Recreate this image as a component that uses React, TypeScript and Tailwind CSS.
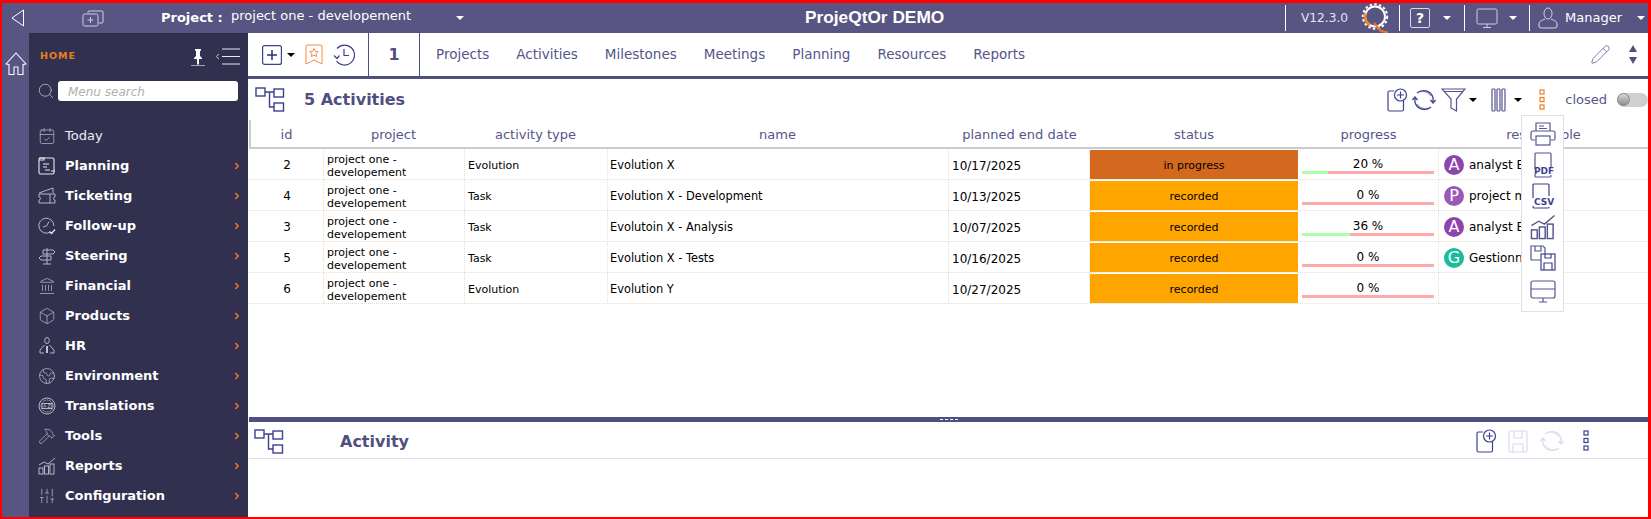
import React from 'react';
import {
  CalendarCheck,
  Landmark,
  Box,
  Earth,
  Hammer,
  SlidersVertical,
  Search,
  Pencil,
  ChevronLeft,
  ChevronRight,
} from 'lucide-react';

const navy = '#3f3f8f';

const Caret = ({ className = 'border-t-white' }: { className?: string }) => (
  <span className={`inline-block w-0 h-0 border-x-[4px] border-x-transparent border-t-[4px] ${className}`} />
);

const Sep = () => <span className="w-px h-[26px] bg-white" />;

const TreeIcon = () => (
  <svg width="31" height="27" viewBox="0 0 31 27" fill="none" stroke={navy} strokeWidth="1.4">
    <rect x="1" y="2" width="9" height="8" />
    <rect x="19" y="3" width="9.5" height="8" />
    <rect x="19" y="17" width="9.5" height="8" />
    <path d="M10 6h9M14.500 6v15h4.500" />
  </svg>
);

const AddDoc = () => (
  <svg width="21" height="24" viewBox="0 0 21 24" fill="none" stroke={navy} strokeWidth="1.2">
    <path d="M7 3H2.500Q1 3 1 4.500V21.500Q1 23 2.500 23H15Q16.500 23 16.500 21.500V13" />
    <circle cx="13.500" cy="7" r="6" fill="#fff" />
    <path d="M13.500 3.500v7M10 7h7" />
  </svg>
);

const Refresh = ({ color = navy }: { color?: string }) => (
  <svg width="24" height="24" viewBox="0 0 24 24" fill="none" stroke={color} strokeWidth="1.3">
    <path d="M5 5A10 10 0 0 1 21 9.500V15" />
    <path d="M7.500 3.800A10 10 0 0 1 19 8" opacity=".5" />
    <path d="M19 19A10 10 0 0 1 3 14.500V9" />
    <path d="M16.500 20.200A10 10 0 0 1 5 16" opacity=".5" />
    <path d="M.5 12 3 9 5.500 12M18.500 12 21 15 23.500 12" />
  </svg>
);

const FloppyIcon = ({ color = '#dcdaea' }: { color?: string }) => (
  <svg width="20" height="23" viewBox="0 0 20 23" fill="none" stroke={color} strokeWidth="1.2">
    <rect x="1" y="1" width="18" height="21" rx="1.500" />
    <path d="M6 1v7h8V1M5 22V14h10v8" />
  </svg>
);

const DotsIcon = ({ color }: { color: string }) => (
  <svg width="6" height="22" viewBox="0 0 6 22" fill="none" stroke={color} strokeWidth="1.2">
    <rect x="1" y="1" width="4" height="4" />
    <rect x="1" y="8.500" width="4" height="4" />
    <rect x="1" y="16" width="4" height="4" />
  </svg>
);

const QLogo = () => (
  <svg width="30" height="30" viewBox="0 0 30 30" fill="none">
    <circle cx="14" cy="13.500" r="12.200" stroke="#fff" strokeWidth="2" strokeDasharray="2.500 2.200" />
    <circle cx="14" cy="13.500" r="10" stroke="#fff" strokeWidth="2" />
    <path d="M9 22A10 10 0 0 1 4.500 10.500" stroke="#f0892c" strokeWidth="3" />
    <path d="M13 20 20 28 27 29.500" stroke="#e87c22" strokeWidth="2" />
  </svg>
);

const HomeIcon = () => (
  <svg width="22" height="24" viewBox="0 0 22 24" fill="none" stroke="#fff" strokeWidth="1.1">
    <path d="M1 12 11 1l10 11-3 .5V22.500h-5V15H9v7.500H4V12.500z" strokeLinejoin="round" />
  </svg>
);

// sidebar icons that lucide has no close match for
const PlanningIcon = () => (
  <svg width="18" height="18" viewBox="0 0 18 18" fill="none" stroke="#e8e8f0" strokeWidth="1.1">
    <rect x="1" y="1" width="15" height="16" rx="1.500" />
    <path d="M1 1h5v2H1M5 7h6M5 10h4M7 13h5M13 14h4" />
  </svg>
);

const TicketIcon = () => (
  <svg width="18" height="18" viewBox="0 0 18 18" fill="none" stroke="#b5b5c6" strokeWidth="1">
    <path d="M1 6 15 1v5M1 7h16v3a1.500 1.500 0 0 0 0 3v3H1v-3a1.500 1.500 0 0 0 0-3zM12 7v9" />
  </svg>
);

const FollowIcon = () => (
  <svg width="18" height="18" viewBox="0 0 18 18" fill="none" stroke="#b5b5c6" strokeWidth="1">
    <path d="M12 15.200A7.500 7.500 0 1 1 15.800 9" />
    <path d="M11 4.500 8.500 9 5 10" />
    <path d="M11.500 14.500 13.500 16.500 17 12.500" stroke="#e8e8f0" strokeWidth="1.300" />
  </svg>
);

const SteeringIcon = () => (
  <svg width="18" height="18" viewBox="0 0 18 18" fill="none" stroke="#b5b5c6" strokeWidth="1">
    <path d="M9 1v16M5 3h10l2 2-2 2H5zM13 9H3L1 11l2 2h10zM5 17h8" />
  </svg>
);

const PersonTie = () => (
  <svg width="18" height="18" viewBox="0 0 18 18" fill="none" stroke="#b5b5c6" strokeWidth="1">
    <ellipse cx="9" cy="3.500" rx="2.300" ry="3" />
    <path d="M6.500 8 2 13v3h4M11.500 8 16 13v3h-4" />
    <path d="M9 9v7" strokeWidth="1.600" stroke="#e8e8f0" />
  </svg>
);

const TranslateIcon = () => (
  <svg width="18" height="18" viewBox="0 0 18 18" fill="none" stroke="#b5b5c6" strokeWidth="1">
    <circle cx="9" cy="9" r="8" />
    <circle cx="9" cy="9" r="6" strokeDasharray="1.500 1" />
    <rect x="4" y="6.500" width="10" height="5" fill="#31314f" />
    <path d="M5.500 10.500 6.800 7.500 8 10.500M10 7.500h2.500L10 10.500h2.500" strokeWidth=".7" />
  </svg>
);

const BarsIcon = ({ size = 18, color = '#b5b5c6' }: { size?: number; color?: string }) => (
  <svg width={size} height={size} viewBox="0 0 18 18" fill="none" stroke={color} strokeWidth="1">
    <path d="M1 8 6 5 10 7 17 1" />
    <rect x="1" y="11" width="4" height="6" />
    <rect x="6.500" y="9" width="4" height="8" />
    <rect x="12" y="7" width="4" height="10" />
  </svg>
);

const iconProps = { size: 18, strokeWidth: 1, color: '#b5b5c6' };

const menu: { label: string; bold: boolean; icon: React.ReactNode }[] = [
  { label: 'Today', bold: false, icon: <CalendarCheck {...iconProps} /> },
  { label: 'Planning', bold: true, icon: <PlanningIcon /> },
  { label: 'Ticketing', bold: true, icon: <TicketIcon /> },
  { label: 'Follow-up', bold: true, icon: <FollowIcon /> },
  { label: 'Steering', bold: true, icon: <SteeringIcon /> },
  { label: 'Financial', bold: true, icon: <Landmark {...iconProps} /> },
  { label: 'Products', bold: true, icon: <Box {...iconProps} /> },
  { label: 'HR', bold: true, icon: <PersonTie /> },
  { label: 'Environment', bold: true, icon: <Earth {...iconProps} /> },
  { label: 'Translations', bold: true, icon: <TranslateIcon /> },
  { label: 'Tools', bold: true, icon: <Hammer {...iconProps} /> },
  { label: 'Reports', bold: true, icon: <BarsIcon /> },
  { label: 'Configuration', bold: true, icon: <SlidersVertical {...iconProps} /> },
];

const tabs = ['Projects', 'Activities', 'Milestones', 'Meetings', 'Planning', 'Resources', 'Reports'];

const rows = [
  { id: 2, type: 'Evolution', name: 'Evolution X', date: '10/17/2025', status: 'in progress', pct: 20, who: 'analyst B', initial: 'A' },
  { id: 4, type: 'Task', name: 'Evolution X - Development', date: '10/13/2025', status: 'recorded', pct: 0, who: 'project m', initial: 'P' },
  { id: 3, type: 'Task', name: 'Evolutoin X - Analysis', date: '10/07/2025', status: 'recorded', pct: 36, who: 'analyst B', initial: 'A' },
  { id: 5, type: 'Task', name: 'Evolution X - Tests', date: '10/16/2025', status: 'recorded', pct: 0, who: 'Gestionna', initial: 'G' },
  { id: 6, type: 'Evolution', name: 'Evolution Y', date: '10/27/2025', status: 'recorded', pct: 0, who: '', initial: '' },
];

const avatarColor: Record<string, string> = { A: '#8e44ad', P: '#9b59b6', G: '#1abc9c' };

const columns = ['id', 'project', 'activity type', 'name', 'planned end date', 'status', 'progress', 'responsible'];
const widths = [75, 141, 143, 341, 141, 208, 141, 209];

const cell = 'p-0 border-b border-r border-dotted border-[#e4e0cf] align-middle';

const ExportMenu = () => (
  <div className="absolute left-[1273px] top-[82px] w-[43px] h-[197px] bg-white border border-[#dfdfe8] flex flex-col items-center pt-[5px] gap-[5px]">
    <svg width="26" height="26" viewBox="0 0 26 26" fill="none" stroke="#55558f" strokeWidth="1.200">
      <path d="M6 10V2h14v8M9 5h5M9 7.500h8" />
      <path d="M5 19H2.500Q1 19 1 17.500V12Q1 10 3 10H23Q25 10 25 12V17.500Q25 19 23.500 19H21" />
      <rect x="6" y="15" width="14" height="9" />
    </svg>
    <svg width="26" height="26" viewBox="0 0 26 26" fill="none" stroke="#55558f" strokeWidth="1.200">
      <path d="M5 17V2q0-1 1-1h14q1 0 1 1v13M5 22v2q0 1 1 1h14q1 0 1-1v-1" />
      <text x="4" y="21.500" fontSize="9" fontWeight="700" fill="#3f3f8f" stroke="none" fontFamily="DejaVu Sans">PDF</text>
    </svg>
    <svg width="26" height="26" viewBox="0 0 26 26" fill="none" stroke={navy} strokeWidth="1.200">
      <path d="M3 15V2q0-1 1-1h14q1 0 1 1v11M3 23v1q0 1 1 1h14q1 0 1-1" />
      <text x="4" y="22" fontSize="9" fontWeight="700" fill="#3f3f8f" stroke="none" fontFamily="DejaVu Sans">CSV</text>
    </svg>
    <BarsIcon size={26} color="#55558f" />
    <svg width="26" height="26" viewBox="0 0 26 26" fill="none" stroke="#55558f" strokeWidth="1.200">
      <path d="M1 15V1h12l2 2v6M5 1v5h6V1M1 15h10" />
      <rect x="11" y="9" width="14" height="16" stroke={navy} fill="#fff" />
      <path d="M15 9v4h6V9M14 25v-7h8v7" stroke={navy} />
    </svg>
    <div className="mt-[4px]">
      <svg width="26" height="24" viewBox="0 0 26 24" fill="none" stroke="#55558f" strokeWidth="1.200">
        <rect x="1" y="1" width="24" height="17" rx="2" />
        <path d="M1 9h24M9 22h8M13 18v4" />
      </svg>
    </div>
  </div>
);

export default function App() {
  return (
    <div className="w-[1651px] h-[519px] box-border border-t-[3px] border-l-2 border-r-[3px] border-b-2 border-[#ff0000] overflow-hidden flex flex-col bg-white font-['DejaVu_Sans',sans-serif]">
      {/* top bar */}
      <div className="h-[30px] shrink-0 bg-[#585582] flex items-center text-white">
        <svg className="ml-[9px]" width="14" height="18" viewBox="0 0 14 18" fill="none" stroke="#fff" strokeWidth="1">
          <path d="M12.500 1v16L1 9z" />
        </svg>
        <svg className="ml-[57px]" width="22" height="17" viewBox="0 0 22 17" fill="none" stroke="#cfcfe0" strokeWidth="1">
          <path d="M6 3V2q0-1 1-1h13q1 0 1 1v10q0 1-1 1h-3" />
          <rect x="1" y="4" width="15" height="12" rx="1.500" />
          <path d="M8.500 7v6M5.500 10h6" />
        </svg>
        <span className="ml-[57px] text-[13px] font-bold w-[70px]">Project :</span>
        <span className="text-[13px] -mt-[4px] w-[225px]">project one - developement</span>
        <Caret />
        <span className="ml-[341px] font-['Liberation_Sans',sans-serif] font-bold text-[17.300px]">ProjeQtOr DEMO</span>
        <span className="ml-auto flex"><Sep /></span>
        <span className="ml-[15px] text-[12.200px] w-[50px] text-[#e4e4ee]">V12.3.0</span>
        <span className="ml-[10px] flex"><QLogo /></span>
        <span className="ml-[8px] flex"><Sep /></span>
        <span className="ml-[10px] w-5 h-5 border border-[#d8d8e6] rounded-[2px] flex items-center justify-center text-[14px] font-bold">?</span>
        <span className="ml-[13px] flex"><Caret /></span>
        <span className="ml-[13px] flex"><Sep /></span>
        <svg className="ml-[11px]" width="22" height="21" viewBox="0 0 22 21" fill="none" stroke="#cfcfe0" strokeWidth="1">
          <rect x="1" y="1" width="20" height="15" rx="1.500" />
          <path d="M11 16v3M7 19.500h8" />
        </svg>
        <span className="ml-[11px] flex"><Caret /></span>
        <span className="ml-[12px] flex"><Sep /></span>
        <svg className="ml-[8px]" width="20" height="22" viewBox="0 0 20 22" fill="none" stroke="#d8d8e6" strokeWidth="1">
          <ellipse cx="10" cy="6.500" rx="4" ry="5.500" />
          <path d="M7 12c-3 1.500-6 2-6 5v2q0 2 2 2h14q2 0 2-2v-2c0-3-3-3.500-6-5" />
        </svg>
        <span className="ml-[7px] text-[13px] w-[72px]">Manager</span>
        <span className="flex"><Caret /></span>
        <span className="w-[3px]" />
      </div>

      <div className="flex-1 min-h-0 flex">
        {/* left strip */}
        <div className="w-[27px] shrink-0 bg-[#585582] flex justify-center pt-[19px]">
          <HomeIcon />
        </div>

        {/* side menu */}
        <div className="w-[219px] shrink-0 bg-[#31314f] flex flex-col">
          <div className="h-[48px] flex items-center pl-[11px] pr-[8px] pb-[1px]">
            <span className="text-[9.500px] font-bold tracking-[1px] text-[#ee7d22] flex-1">HOME</span>
            <svg width="14" height="18" viewBox="0 0 14 18" fill="#fff" stroke="none">
              <path d="M4 1h6v1.500L9 3v5l2 2v1H8v5l-1 1-1-1v-5H3v-1l2-2V3L4 2.500z" />
              <path d="M0 17h14v.8H0z" opacity=".7" />
            </svg>
            <span className="ml-[8px] flex items-center">
              <ChevronLeft size={9} strokeWidth={2} color="#fff" />
              <svg width="18" height="17" viewBox="0 0 18 17" stroke="#e8e8f0" strokeWidth="1">
                <path d="M0 1h18M0 8.500h18M0 16h18" />
              </svg>
            </span>
          </div>
          <div className="h-[20px] flex items-center pl-[8px] pr-[10px] mb-[20px]">
            <Search size={18} strokeWidth={1.300} color="#a8a8b8" className="shrink-0" />
            <div className="ml-[3px] flex-1 h-[20px] bg-white rounded-[3px] flex items-center pl-[10px] pt-px text-[12px] italic text-[#b0b0b0]">
              Menu search
            </div>
          </div>
          {menu.map((m) => (
            <div key={m.label} className="h-[30px] shrink-0 flex items-center pl-[9px] pr-[6px] text-white">
              <span className="w-[18px] flex">{m.icon}</span>
              <span className={`ml-[9px] flex-1 text-[13px] ${m.bold ? 'font-bold' : 'text-[#ececf4]'}`}>{m.label}</span>
              {m.bold && <ChevronRight size={10} strokeWidth={3.500} color="#ee7d22" />}
            </div>
          ))}
        </div>

        {/* main */}
        <div className="flex-1 min-w-0 flex flex-col relative">
          <div className="h-[43px] shrink-0 flex items-stretch">
            <div className="w-[121px] flex items-center pl-[14px] border-r border-[#4f4f80]">
              <svg width="20" height="20" viewBox="0 0 20 20" fill="none" stroke={navy} strokeWidth="1.200">
                <rect x=".6" y=".6" width="18.800" height="18.800" rx="2" />
                <path d="M10 5v10M5 10h10" stroke="#2d2d80" strokeWidth="1.500" />
              </svg>
              <span className="ml-[5px] flex"><Caret className="border-t-black" /></span>
              <svg className="ml-[10px]" width="18" height="21" viewBox="0 0 18 21" fill="none" stroke="#f08c4c" strokeWidth="1">
                <path d="M1 2q0-1 1-1h14q1 0 1 1v18l-8-4-8 4z" />
                <path d="M9 4.500l1.300 2.700 2.900.4-2.100 2 .5 2.900L9 11.200l-2.600 1.300.5-2.900-2.100-2 2.900-.4z" />
              </svg>
              <svg className="ml-[10px]" width="22" height="22" viewBox="0 0 22 22" fill="none" stroke={navy} strokeWidth="1.200">
                <path d="M4 4.500A10 10 0 1 1 3.500 17" />
                <path d="M11 5v6.500h5M1 11.500l3 3 2.500-3" />
              </svg>
            </div>
            <div className="w-[51px] flex items-center justify-center border-r border-[#4f4f80] text-[16px] font-bold text-[#4f4f80]">1</div>
            <div className="flex items-center pl-[16px] gap-[27px] text-[13.500px] text-[#55558a]">
              {tabs.map((t) => <span key={t}>{t}</span>)}
            </div>
            <div className="ml-auto flex items-center pr-[11px]">
              <Pencil size={21} strokeWidth={1} color="#6a6a98" />
              <div className="ml-[18px] flex flex-col gap-[5px]">
                <span className="w-0 h-0 border-x-[4px] border-x-transparent border-b-[7px] border-b-[#4f4f80]" />
                <span className="w-0 h-0 border-x-[4px] border-x-transparent border-t-[7px] border-t-[#4f4f80]" />
              </div>
            </div>
          </div>
          <div className="h-[3px] shrink-0 bg-[#4f4f80]" />

          {/* list pane */}
          <div className="h-[338px] shrink-0 flex flex-col">
            <div className="h-[41px] shrink-0 flex items-center pl-[7px]">
              <TreeIcon />
              <span className="ml-[18px] text-[16px] font-bold text-[#4f4f80]">5 Activities</span>
              <div className="ml-auto flex items-center text-[#55558a]">
                <AddDoc />
                <span className="ml-[4px] flex"><Refresh /></span>
                <svg className="ml-[5px]" width="25" height="24" viewBox="0 0 25 24" fill="none" stroke="#55558f" strokeWidth="1.200">
                  <path d="M1 1h23L15.500 11v12L10 20V11zM3.500 3.500h18" />
                </svg>
                <span className="ml-[3px] flex"><Caret className="border-t-black" /></span>
                <svg className="ml-[14px]" width="15" height="24" viewBox="0 0 15 24" fill="none" stroke="#55558f" strokeWidth="1.200">
                  <rect x="1" y="1" width="3" height="22" rx=".8" />
                  <rect x="6" y="1" width="3" height="22" rx=".8" />
                  <rect x="11" y="1" width="3" height="22" rx=".8" />
                </svg>
                <span className="ml-[8px] flex"><Caret className="border-t-black" /></span>
                <span className="ml-[17px] flex"><DotsIcon color="#ee7d22" /></span>
                <span className="ml-[20px] text-[13px]">closed</span>
                <span className="ml-[10px] w-[31px] h-[14px] rounded-full bg-[#cfcfcf] flex items-center">
                  <span className="w-[13px] h-[13px] rounded-full border border-[#888] bg-linear-to-b from-[#d8d8d8] to-[#8e8e8e]" />
                </span>
              </div>
            </div>

            <div className="pl-px">
              <table className="table-fixed w-[1399px] border-separate border-spacing-0 text-[11px] text-black">
                <colgroup>
                  {widths.map((w, i) => <col key={i} style={{ width: w }} />)}
                </colgroup>
                <thead>
                  <tr>
                    {columns.map((c, i) => (
                      <th key={c} className={`p-0 pt-[2px] h-[29px] border-b-2 border-[#cccccc] text-[13px] font-normal text-[#55558a] text-center ${i === 0 ? 'border-l-2' : ''} ${i < 4 ? 'pr-[2px]' : ''}`}>
                        {c}
                      </th>
                    ))}
                  </tr>
                </thead>
                <tbody>
                  {rows.map((r) => (
                    <tr key={r.id}>
                      <td className={`${cell} h-[31px] pt-[2px] pl-[2px] text-center text-[12px]`}>{r.id}</td>
                      <td className={`${cell} pl-[3px] pt-[3px] leading-[13px]`}>project one -<br />developement</td>
                      <td className={`${cell} pl-[3px] pt-[4px]`}>{r.type}</td>
                      <td className={`${cell} pl-[2px] pt-[3px] text-[11.400px]`}>{r.name}</td>
                      <td className={`${cell} pl-[3px] pt-[3px] text-[12px]`}>{r.date}</td>
                      <td className={`${cell} pt-px border-r-0`}>
                        <div className={`h-[29px] pt-[3px] flex items-center justify-center ${r.status === 'recorded' ? 'bg-[#ffa500]' : 'bg-[#d2691e]'}`}>
                          {r.status}
                        </div>
                      </td>
                      <td className={`${cell} px-[4px]`}>
                        <div className="flex flex-col items-stretch pt-[3px] text-[12px] leading-[14px] text-center">
                          {r.pct} %
                          <div className="h-[3px] bg-[#ffaaaa] flex">
                            <div className="h-full bg-[#aaffaa]" style={{ width: `${r.pct}%` }} />
                          </div>
                        </div>
                      </td>
                      <td className="p-0 border-b border-dotted border-[#e4e0cf]">
                        {r.who && (
                          <div className="flex items-center pl-[5px] pt-px gap-[5px] text-[12px]">
                            <span
                              className="w-5 h-5 rounded-full flex items-center justify-center text-white text-[16px]"
                              style={{ backgroundColor: avatarColor[r.initial] }}
                            >
                              {r.initial}
                            </span>
                            {r.who}
                          </div>
                        )}
                      </td>
                    </tr>
                  ))}
                </tbody>
              </table>
            </div>
          </div>

          {/* splitter */}
          <div className="h-[5px] shrink-0 ml-px bg-[#4f4f80] flex items-center justify-center">
            <span className="w-[18px] border-t border-dashed border-white" />
          </div>

          {/* detail pane */}
          <div className="h-[37px] shrink-0 ml-px pt-[2px] border-b border-[#e0dcec] flex items-center pl-[5px]">
            <TreeIcon />
            <span className="ml-[55px] pt-[1px] text-[16px] font-bold text-[#4f4f80]">Activity</span>
            <div className="ml-auto flex items-center pr-[59px]">
              <AddDoc />
              <span className="ml-[11px] flex"><FloppyIcon /></span>
              <span className="ml-[12px] flex"><Refresh color="#dcdaea" /></span>
              <span className="ml-[19px] flex"><DotsIcon color={navy} /></span>
            </div>
          </div>

          <ExportMenu />
        </div>
      </div>
    </div>
  );
}
